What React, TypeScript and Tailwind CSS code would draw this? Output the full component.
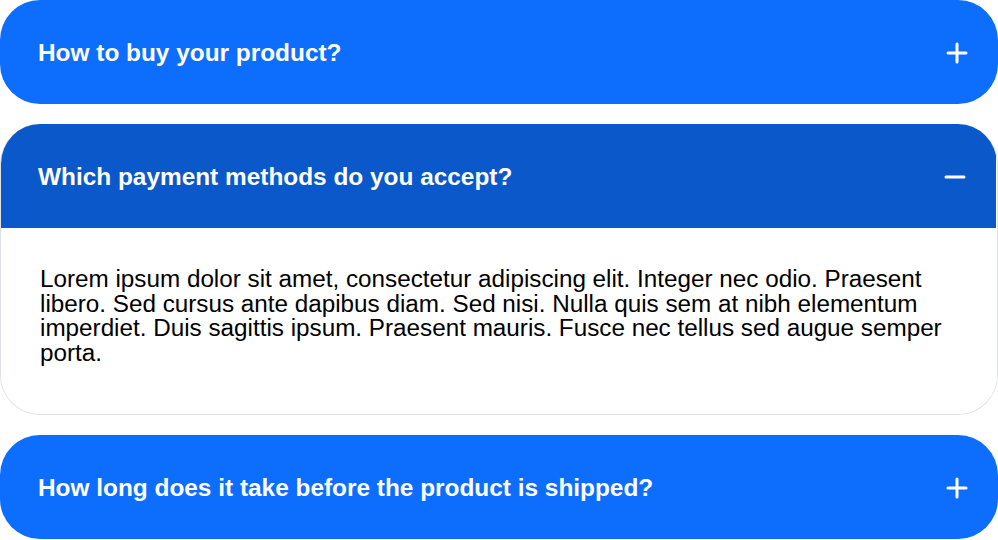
import { useState } from 'react'

const items = [
  {
    q: 'How to buy your product?',
    a: 'Lorem ipsum dolor sit amet, consectetur adipiscing elit. Integer nec odio. Praesent libero. Sed cursus ante dapibus diam. Sed nisi. Nulla quis sem at nibh elementum imperdiet. Duis sagittis ipsum. Praesent mauris. Fusce nec tellus sed augue semper porta.',
  },
  {
    q: 'Which payment methods do you accept?',
    a: 'Lorem ipsum dolor sit amet, consectetur adipiscing elit. Integer nec odio. Praesent libero. Sed cursus ante dapibus diam. Sed nisi. Nulla quis sem at nibh elementum imperdiet. Duis sagittis ipsum. Praesent mauris. Fusce nec tellus sed augue semper porta.',
  },
  {
    q: 'How long does it take before the product is shipped?',
    a: 'Lorem ipsum dolor sit amet, consectetur adipiscing elit. Integer nec odio. Praesent libero. Sed cursus ante dapibus diam. Sed nisi. Nulla quis sem at nibh elementum imperdiet. Duis sagittis ipsum. Praesent mauris. Fusce nec tellus sed augue semper porta.',
  },
]

function Icon({ open }: { open: boolean }) {
  return (
    <svg width="22" height="22" viewBox="0 0 22 22" fill="none" stroke="white" strokeWidth="3" strokeLinecap="round">
      <path d="M2 11h18" />
      {!open && <path d="M11 2v18" />}
    </svg>
  )
}

export default function App() {
  const [open, setOpen] = useState(1)

  return (
    <div className="w-[998px] flex flex-col gap-5 font-['Liberation_Sans',Arial,sans-serif]">
      {items.map((item, i) => {
        const isOpen = open === i
        return (
          <div
            key={i}
            className={`rounded-[40px] overflow-hidden ${isOpen ? 'border border-[#dee2e6] border-t-0' : ''}`}
          >
            <button
              onClick={() => setOpen(isOpen ? -1 : i)}
              className={`w-full h-[104px] flex items-center justify-between pl-[38px] pr-[30px] pt-[2px] text-left text-white font-bold text-[24.4px] ${
                isOpen ? 'bg-[#0b58ca] -mx-px w-[calc(100%+2px)]' : 'bg-[#0d6efd]'
              }`}
            >
              <span>{item.q}</span>
              <Icon open={isOpen} />
            </button>
            {isOpen && (
              <div className="bg-white pl-[39px] pr-[40px] pt-[39px] pb-[49px] text-[24.25px] leading-[24.5px] text-black">
                {item.a}
              </div>
            )}
          </div>
        )
      })}
    </div>
  )
}
